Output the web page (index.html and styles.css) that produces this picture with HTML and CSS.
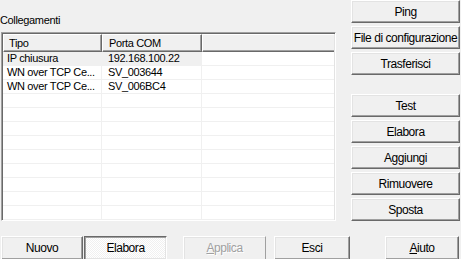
FILE: index.html
```html
<!DOCTYPE html>
<html lang="it">
<head>
  <meta charset="UTF-8">
  <title>Collegamenti</title>
  <link rel="stylesheet" href="styles.css">
</head>
<body>
  <div class="window">
    <div class="links">
      <p class="label">Collegamenti</p>
      <div class="list">
        <div class="row head">
          <div class="cell c1">Tipo</div>
          <div class="cell c2">Porta COM</div>
          <div class="cell c3"></div>
        </div>
        <div class="row selected">
          <div class="cell c1">IP chiusura</div>
          <div class="cell c2">192.168.100.22</div>
          <div class="cell c3"></div>
        </div>
        <div class="row">
          <div class="cell c1">WN over TCP Ce...</div>
          <div class="cell c2">SV_003644</div>
          <div class="cell c3"></div>
        </div>
        <div class="row">
          <div class="cell c1">WN over TCP Ce...</div>
          <div class="cell c2">SV_006BC4</div>
          <div class="cell c3"></div>
        </div>
        <div class="row"><div class="cell c1"></div><div class="cell c2"></div><div class="cell c3"></div></div>
        <div class="row"><div class="cell c1"></div><div class="cell c2"></div><div class="cell c3"></div></div>
        <div class="row"><div class="cell c1"></div><div class="cell c2"></div><div class="cell c3"></div></div>
        <div class="row"><div class="cell c1"></div><div class="cell c2"></div><div class="cell c3"></div></div>
        <div class="row"><div class="cell c1"></div><div class="cell c2"></div><div class="cell c3"></div></div>
        <div class="row"><div class="cell c1"></div><div class="cell c2"></div><div class="cell c3"></div></div>
        <div class="row"><div class="cell c1"></div><div class="cell c2"></div><div class="cell c3"></div></div>
        <div class="row"><div class="cell c1"></div><div class="cell c2"></div><div class="cell c3"></div></div>
        <div class="row"><div class="cell c1"></div><div class="cell c2"></div><div class="cell c3"></div></div>
      </div>
    </div>

    <div class="side">
      <div class="group">
        <button class="btn">Ping</button>
        <button class="btn">File di configurazione</button>
        <button class="btn">Trasferisci</button>
      </div>
      <div class="group">
        <button class="btn">Test</button>
        <button class="btn">Elabora</button>
        <button class="btn">Aggiungi</button>
        <button class="btn">Rimuovere</button>
        <button class="btn">Sposta</button>
      </div>
    </div>

    <div class="footer">
      <button class="btn nuovo">Nuovo</button>
      <button class="btn pressed elabora">Elabora</button>
      <button class="btn disabled applica"><u>A</u>pplica</button>
      <button class="btn esci">Esci</button>
      <button class="btn aiuto"><u>A</u>iuto</button>
    </div>
  </div>
</body>
</html>
```

FILE: styles.css
```css
body {
  margin: 0px;
  background-color: #f0f0f0;
  font-family: 'Liberation Sans', Arial, sans-serif;
  font-size: 11px;
  color: #000;
  overflow: hidden;
}

.window {
  width: 461px;
  height: 259px;
  display: grid;
  grid-template-columns: 351px 110px;
  grid-template-rows: 236px 23px;
}

.links {
  padding-top: 14px;
}

.label {
  margin: 0px;
  height: 13px;
  line-height: 13px;
  letter-spacing: -0.35px;
}

.list {
  margin-top: 5px;
  margin-left: 1px;
  width: 335px;
  height: 189px;
  box-sizing: border-box;
  background-color: #fff;
  border-top: 1px solid #a0a0a0;
  border-left: 1px solid #a0a0a0;
  border-right: 1px solid #fff;
  border-bottom: 1px solid #fff;
  box-shadow: inset 1px 1px #696969, inset -1px -1px #e3e3e3;
  padding: 1px;
  overflow: hidden;
  letter-spacing: -0.35px;
}

.row {
  display: flex;
  height: 14px;
}

.cell {
  box-sizing: border-box;
  height: 14px;
  line-height: 13px;
  border-bottom: 1px solid #f0f0f0;
  border-right: 1px solid #f0f0f0;
  white-space: nowrap;
  overflow: hidden;
}

.c1 {
  width: 99px;
  padding-left: 4px;
}

.c2 {
  width: 100px;
  padding-left: 6px;
}

.c3 {
  flex: 1;
  border-right: none;
}

.selected .c1,
.selected .c2 {
  background-color: #f0f0f0;
}

.row.head {
  height: 18px;
}

.head .cell {
  height: 18px;
  line-height: 16px;
  background-color: #f0f0f0;
  border-top: 1px solid #fff;
  border-left: 1px solid #fff;
  border-right: 1px solid #696969;
  border-bottom: 1px solid #696969;
  box-shadow: inset -1px -1px #a0a0a0;
}

.head .c1 {
  padding-left: 5px;
}

.head .c3 {
  border-right: none;
  box-shadow: inset 0 -1px #a0a0a0;
}

.side {
  display: flex;
  flex-direction: column;
  gap: 19px;
}

.group {
  display: flex;
  flex-direction: column;
  gap: 3px;
}

.btn {
  box-sizing: border-box;
  width: 109px;
  height: 23px;
  padding: 0px;
  margin: 0px;
  font-family: inherit;
  font-size: 12px;
  letter-spacing: -0.45px;
  color: #000;
  background-color: #f0f0f0;
  border-top: 1px solid #fff;
  border-left: 1px solid #fff;
  border-right: 1px solid #696969;
  border-bottom: 1px solid #696969;
  box-shadow: inset -1px -1px #a0a0a0, inset 1px 1px #e3e3e3;
  white-space: nowrap;
}

.btn u {
  text-decoration: underline;
}

.footer {
  grid-column: 1 / 3;
  display: flex;
  align-items: flex-start;
}

.footer .btn {
  height: 24px;
}

.nuovo {
  margin-left: 1px;
  width: 82px;
}

.elabora {
  margin-left: 1px;
  width: 83px;
}

.applica {
  margin-left: 16px;
  width: 83px;
}

.esci {
  margin-left: 8px;
  width: 76px;
}

.aiuto {
  margin-left: 35px;
  width: 74px;
}

.btn.pressed {
  background: repeating-conic-gradient(#fff 0 25%, #f0f0f0 0 50%) 0 0 / 2px 2px;
  border-top: 1px solid #696969;
  border-left: 1px solid #696969;
  border-right: 1px solid #fff;
  border-bottom: 1px solid #fff;
  box-shadow: inset 1px 1px #a0a0a0, inset -1px -1px #e3e3e3;
}

.btn.disabled {
  color: #a0a0a0;
  text-shadow: 1px 1px #fff;
  border-right: 1px solid #a0a0a0;
  border-bottom: 1px solid #a0a0a0;
  box-shadow: inset 1px 1px #e3e3e3;
}
```
